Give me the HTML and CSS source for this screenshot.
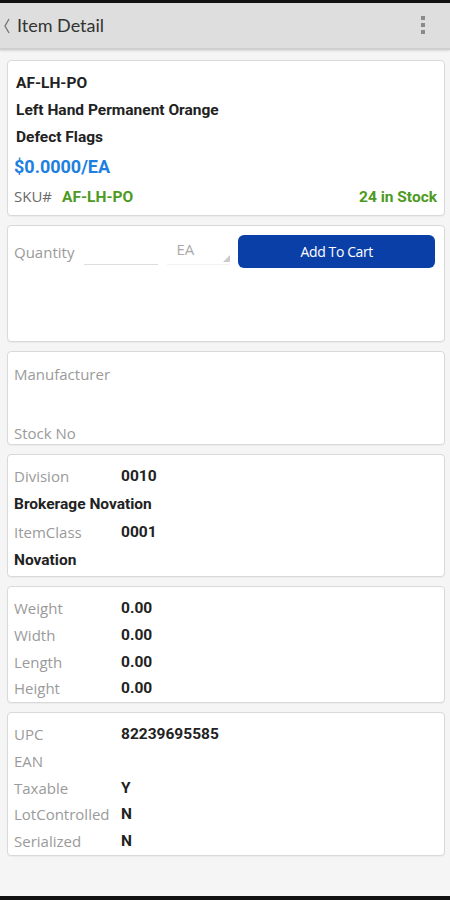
FILE: index.html
```html
<!doctype html>
<html>
	<head>
		<meta charset="utf-8" />
		<meta name="viewport" content="width=device-width, initial-scale=1" />
		<title>Item Detail</title>
		<link rel="stylesheet" href="styles.css">
	</head>
	<body>
		<div class="statusbar"></div>
		<div class="topbar">
			<svg class="back" width="14" height="20" viewBox="0 0 14 20">
				<polyline points="9,3 5,10 9,17" fill="none" stroke="#777" stroke-width="1.4" />
			</svg>
			<span class="title">Item Detail</span>
			<span class="menu"><i></i><i></i><i></i></span>
		</div>

		<div class="page">
			<div class="card head">
				<p class="name">AF-LH-PO</p>
				<p class="name">Left Hand Permanent Orange</p>
				<p class="name">Defect Flags</p>
				<p class="price">$0.0000/EA</p>
				<div class="skurow">
					<span class="label">SKU#</span>
					<span class="sku">AF-LH-PO</span>
					<span class="stock">24 in Stock</span>
				</div>
			</div>

			<div class="card order">
				<div class="orderrow">
					<span class="label">Quantity</span>
					<span class="qty"></span>
					<span class="uom">EA<i class="tri"></i></span>
					<button class="cart">Add To Cart</button>
				</div>
			</div>

			<div class="card mfr">
				<span class="label">Manufacturer</span>
				<span class="label">Stock No</span>
			</div>

			<div class="card info division">
				<div class="row"><span class="label">Division</span><span class="val">0010</span></div>
				<div class="row"><span class="val">Brokerage Novation</span></div>
				<div class="row"><span class="label">ItemClass</span><span class="val">0001</span></div>
				<div class="row"><span class="val">Novation</span></div>
			</div>

			<div class="card info dims">
				<div class="row"><span class="label">Weight</span><span class="val">0.00</span></div>
				<div class="row"><span class="label">Width</span><span class="val">0.00</span></div>
				<div class="row"><span class="label">Length</span><span class="val">0.00</span></div>
				<div class="row"><span class="label">Height</span><span class="val">0.00</span></div>
			</div>

			<div class="card info codes">
				<div class="row"><span class="label">UPC</span><span class="val">82239695585</span></div>
				<div class="row"><span class="label">EAN</span><span class="val"></span></div>
				<div class="row"><span class="label">Taxable</span><span class="val">Y</span></div>
				<div class="row"><span class="label">LotControlled</span><span class="val">N</span></div>
				<div class="row"><span class="label">Serialized</span><span class="val">N</span></div>
			</div>
		</div>
		<div class="navbar"></div>
	</body>
</html>
```

FILE: styles.css
```css
html, body {
	margin: 0;
	padding: 0;
}
body {
	width: 450px;
	height: 900px;
	background-color: #f5f5f5;
	font-family: "Open Sans", sans-serif;
	color: #222;
	display: flex;
	flex-direction: column;
	overflow: hidden;
}
p {
	margin: 0;
}
.statusbar {
	height: 3px;
	background-color: #111;
}
.topbar {
	height: 45px;
	background-color: #dedede;
	border-bottom: 2px solid #cfcfcf;
	box-shadow: 0 1px 2px rgba(0, 0, 0, .12);
	display: flex;
	align-items: center;
	padding-left: 0;
}
.back {
	margin-left: 0;
	margin-right: 3px;
}
.title {
	font-family: Lato, sans-serif;
	font-size: 18px;
	color: #333;
	flex: 1;
	margin-top: -1px;
}
.menu {
	display: flex;
	flex-direction: column;
	gap: 3px;
	width: 4px;
	margin-right: 25px;
	margin-top: -2px;
}
.menu i {
	display: block;
	width: 4px;
	height: 4px;
	background-color: #8a8a8a;
}
.page {
	flex: 1;
	padding: 10px 5px 0 7px;
	display: flex;
	flex-direction: column;
	gap: 9px;
}
.card {
	background-color: #fff;
	border: 1px solid #d9d9d9;
	border-radius: 4px;
	box-shadow: 0 1px 1px rgba(0, 0, 0, .04);
	box-sizing: border-box;
	flex: none;
}
.label {
	font-size: 15px;
	color: #9a9a9a;
}
.val, .name, .sku, .stock {
	font-family: Roboto, sans-serif;
	font-weight: bold;
	font-size: 15.5px;
	color: #222;
}

/* item heading */
.head {
	height: 156px;
	padding: 9px 7px 0 8px;
}
.name {
	line-height: 27px;
}
.price {
	font-family: Roboto, sans-serif;
	font-weight: bold;
	font-size: 18px;
	color: #1e7fe0;
	line-height: 30px;
	margin-top: 1px;
	margin-left: -2px;
}
.skurow {
	display: flex;
	align-items: baseline;
	line-height: 28px;
	margin-left: -2px;
}
.skurow .label {
	color: #6a6a6a;
}
.sku {
	color: #4c9a22;
	margin-left: 10px;
	flex: 1;
}
.stock {
	color: #4c9a22;
}

/* quantity + cart */
.order {
	height: 117px;
	padding: 9px 9px 0 6px;
}
.orderrow {
	display: flex;
	align-items: center;
	height: 33px;
}
.qty {
	width: 74px;
	height: 26px;
	border-bottom: 1px solid #ddd;
	margin-left: 10px;
}
.uom {
	position: relative;
	width: 63px;
	height: 26px;
	box-sizing: border-box;
	margin-left: 9px;
	padding-left: 9px;
	font-size: 15px;
	color: #aaa;
	line-height: 20px;
	border-bottom: 1px solid #f2f2f2;
}
.tri {
	position: absolute;
	right: 0;
	bottom: 2px;
	width: 0;
	height: 0;
	border-left: 7px solid transparent;
	border-bottom: 7px solid #ccc;
}
.cart {
	margin-left: 8px;
	flex: 1;
	height: 33px;
	background-color: #0b3fa8;
	border: none;
	border-radius: 6px;
	color: #fff;
	font-family: "Open Sans", sans-serif;
	font-size: 14px;
	letter-spacing: -.4px;
}

/* manufacturer */
.mfr {
	height: 94px;
	padding: 12px 7px 0 6px;
	display: flex;
	flex-direction: column;
	gap: 39px;
	line-height: 20px;
}

/* label / value rows */
.info {
	padding: 7px 7px 0 6px;
	display: flex;
	flex-direction: column;
}
.row {
	display: flex;
	align-items: center;
	height: 28px;
}
.row .label {
	width: 107px;
	flex: none;
}
.division {
	height: 123px;
}
.dims {
	height: 117px;
	padding-top: 8px;
}
.codes {
	height: 144px;
	padding-top: 8px;
}
.dims .row, .codes .row {
	height: 26.7px;
}
.navbar {
	height: 4px;
	background-color: #111;
}
```
